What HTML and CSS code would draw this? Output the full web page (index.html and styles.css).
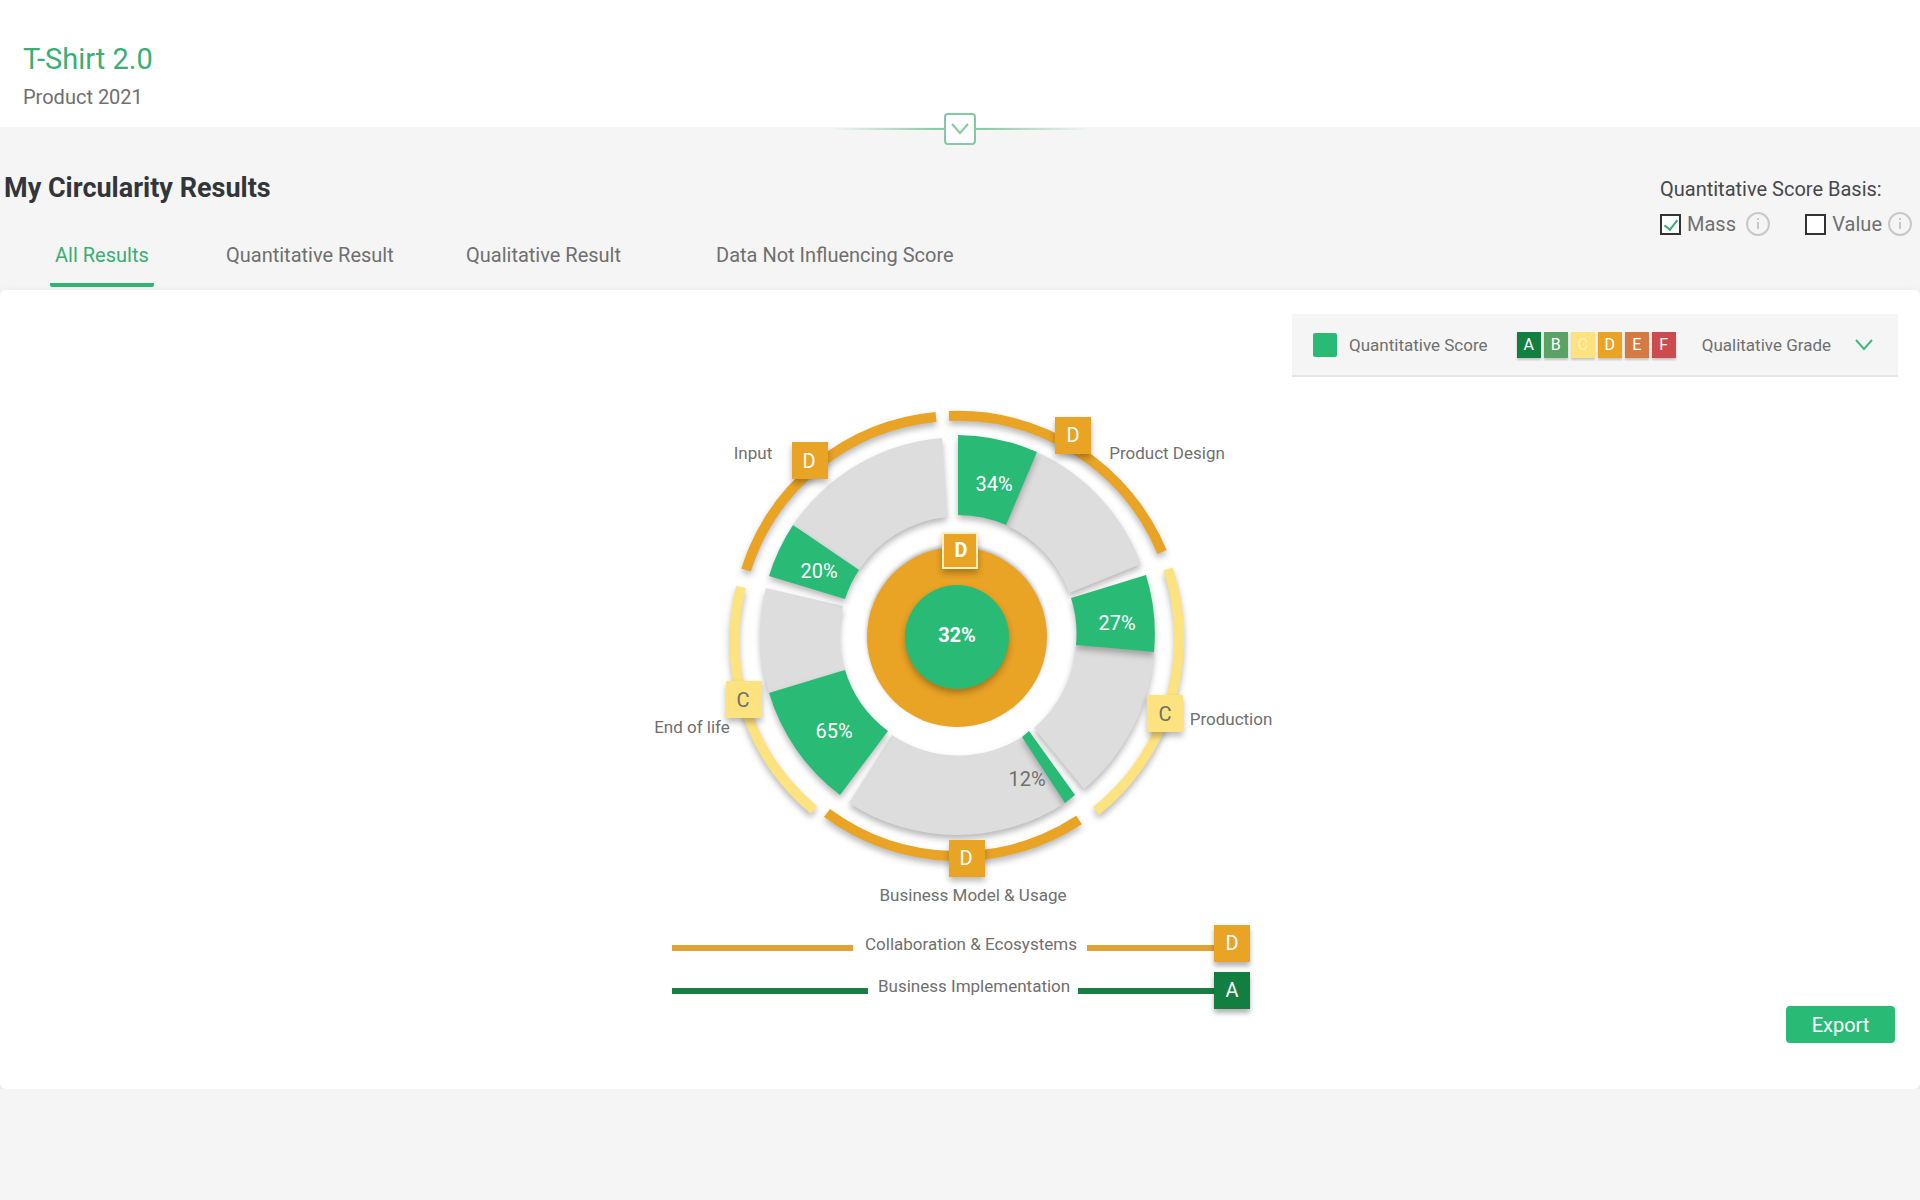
FILE: index.html
```html
<!DOCTYPE html>
<html lang="en">
<head>
<meta charset="utf-8">
<meta name="viewport" content="width=device-width, initial-scale=1">
<title>T-Shirt 2.0 – Circularity Results</title>
<link rel="stylesheet" href="styles.css">
</head>
<body>
<header class="product-header">
  <h1 class="product-name">T-Shirt 2.0</h1>
  <p class="product-period">Product 2021</p>
  <div class="expander">
    <button class="expander-button" type="button" aria-label="Expand header">
      <svg width="18" height="12" viewBox="0 0 18 12" aria-hidden="true"><path d="M1 1l8 9 8-9" fill="none" stroke="currentColor" stroke-width="2"/></svg>
    </button>
  </div>
</header>

<main>
  <section class="results-head">
    <div class="results-nav">
      <h2 class="results-title">My Circularity Results</h2>
      <nav class="tabs" aria-label="Results">
        <a class="tab tab-active" href="#all" aria-current="page">All Results</a>
        <a class="tab" href="#quantitative">Quantitative Result</a>
        <a class="tab" href="#qualitative">Qualitative Result</a>
        <a class="tab" href="#other">Data Not Influencing Score</a>
      </nav>
    </div>
    <fieldset class="basis">
      <legend class="basis-title">Quantitative Score Basis:</legend>
      <div class="basis-options">
        <div class="option option-mass">
          <input class="check" type="checkbox" id="mass" checked>
          <label for="mass">Mass</label>
          <button class="info" type="button" aria-label="About mass"><svg width="24" height="24" viewBox="0 0 24 24" aria-hidden="true"><circle cx="12" cy="12" r="11"/><path d="M12 10v7M12 6v2"/></svg></button>
        </div>
        <div class="option option-value">
          <input class="check" type="checkbox" id="value">
          <label for="value">Value</label>
          <button class="info" type="button" aria-label="About value"><svg width="24" height="24" viewBox="0 0 24 24" aria-hidden="true"><circle cx="12" cy="12" r="11"/><path d="M12 10v7M12 6v2"/></svg></button>
        </div>
      </div>
    </fieldset>
  </section>

  <section class="card">
    <div class="legend">
      <span class="legend-swatch"></span>
      <span class="legend-score">Quantitative Score</span>
      <span class="grades">
        <span class="grade grade-a">A</span><span class="grade grade-b">B</span><span class="grade grade-c">C</span><span class="grade grade-d">D</span><span class="grade grade-e">E</span><span class="grade grade-f">F</span>
      </span>
      <span class="legend-grade">Qualitative Grade</span>
      <button class="legend-toggle" type="button" aria-label="Show grades">
        <svg width="18" height="12" viewBox="0 0 18 12" aria-hidden="true"><path d="M1 1l8 9 8-9" fill="none" stroke="currentColor" stroke-width="2"/></svg>
      </button>
    </div>

    <svg class="wheel" width="660" height="516" viewBox="630 400 660 516" role="img" aria-label="Circularity score by life cycle stage">
      <!-- grade arcs -->
      <g class="arcs">
        <g class="shadow"><path class="arc-d" d="M949 416A221 221 0 0 1 1162 552"/></g>
        <g class="shadow"><path class="arc-c" d="M1168 569A221 221 0 0 1 1096 811"/></g>
        <g class="shadow"><path class="arc-d" d="M1079 820A221 221 0 0 1 827 813"/></g>
        <g class="shadow"><path class="arc-c" d="M814 810A221 221 0 0 1 741 587"/></g>
        <g class="shadow"><path class="arc-d" d="M746 570A221 221 0 0 1 936 417"/></g>
      </g>
      <!-- stage segments: remainder and score -->
      <g class="shadow rest">
        <path d="M1037 452A200 200 0 0 1 1141 564L1069 593A119 119 0 0 0 1006 525Z"/>
        <path d="M1154 652A198 198 0 0 1 1084 789L1034 728A119 119 0 0 0 1076 645Z"/>
        <path d="M1065 803A198 198 0 0 1 849 803L892 735A118 118 0 0 0 1022 737Z"/>
        <path d="M769 693A198 198 0 0 1 766 588L843 606A119 119 0 0 0 845 670Z"/>
        <path d="M793 525A200 200 0 0 1 942 438L947 517A119 119 0 0 0 859 570Z"/>
      </g>
      <g class="shadow score">
        <path d="M958 435A200 200 0 0 1 1037 452L1006 525A119 119 0 0 0 958 515Z"/>
        <path d="M1146 575A200 200 0 0 1 1154 652L1076 645A119 119 0 0 0 1071 598Z"/>
        <path d="M1029 731L1075 795L1065 803L1022 737Z"/>
        <path d="M840 795A200 200 0 0 1 769 693L845 670A119 119 0 0 0 888 731Z"/>
        <path d="M769 576A200 200 0 0 1 793 525L859 570A119 119 0 0 0 845 599Z"/>
      </g>
      <!-- overall result -->
      <g class="shadow-up"><circle class="total-grade" cx="957" cy="637" r="90"/></g>
      <g class="shadow"><circle class="total-score" cx="957" cy="637" r="52"/></g>

      <g class="shadow">
        <rect class="fill-d" x="792" y="442" width="36" height="37"/>
        <rect class="fill-d" x="1055" y="417" width="36" height="37"/>
        <rect class="fill-c" x="1147" y="695" width="36" height="37"/>
        <rect class="fill-d" x="949" y="840" width="36" height="37"/>
        <rect class="fill-c" x="726" y="681" width="36" height="37"/>
        <rect class="fill-d framed" x="943" y="533" width="34" height="35"/>
      </g>
      <g class="letters">
        <text x="809" y="468">D</text>
        <text x="1073" y="442">D</text>
        <text class="dark" x="1165" y="721">C</text>
        <text x="966" y="865">D</text>
        <text class="dark" x="743" y="707">C</text>
        <text class="strong" x="961" y="557">D</text>
        <text x="994" y="491">34%</text>
        <text x="1117" y="630">27%</text>
        <text class="dark" x="1027" y="786">12%</text>
        <text x="834" y="738">65%</text>
        <text x="819" y="578">20%</text>
        <text class="strong" x="957" y="642">32%</text>
      </g>
      <g class="names">
        <text x="753" y="459">Input</text>
        <text x="1167" y="459">Product Design</text>
        <text x="1231" y="725">Production</text>
        <text x="973" y="901">Business Model &amp; Usage</text>
        <text x="692" y="733">End of life</text>
      </g>
    </svg>

    <div class="card-foot">
      <div class="overall">
        <div class="overall-row row-d">
          <span class="rule rule-lead"></span><span class="overall-name">Collaboration &amp; Ecosystems</span><span class="rule"></span><span class="badge">D</span>
        </div>
        <div class="overall-row row-a">
          <span class="rule rule-lead"></span><span class="overall-name">Business Implementation</span><span class="rule"></span><span class="badge">A</span>
        </div>
      </div>
      <button class="export" type="button">Export</button>
    </div>
  </section>
</main>
</body>
</html>
```
FILE: styles.css
```css
* { box-sizing: border-box; }

body {
  margin: 0;
  background: #f5f5f5;
  color: #6f6f6f;
  font: 20px/24px Roboto, "Liberation Sans", sans-serif;
}

h1, h2, p { margin: 0; }

button {
  border: 0;
  padding: 0;
  background: none;
  font: inherit;
  cursor: pointer;
}

svg { display: block; }

/* Product header */
.product-header {
  position: relative;
  height: 127px;
  padding: 42px 23px 0;
  background: #fff;
}

.product-name {
  color: #3aae75;
  font-size: 29px;
  font-weight: 400;
  line-height: 34px;
}

.product-period { margin-top: 9px; }

.expander {
  position: absolute;
  left: 0;
  right: 0;
  bottom: -18px;
  display: flex;
  justify-content: center;
  background: linear-gradient(90deg, transparent, #8dcaa9 40%, #8dcaa9 60%, transparent) center / 260px 2px no-repeat;
}

.expander-button {
  display: grid;
  place-items: center;
  width: 32px;
  height: 32px;
  border: 2px solid #84c8a4;
  border-radius: 4px;
  background: #fff;
  color: #84c8a4;
}

/* Title, tabs and score basis */
.results-head {
  display: flex;
  justify-content: space-between;
  padding: 45px 8px 3px 4px;
}

.results-title {
  color: #32363a;
  font-size: 27px;
  font-weight: 700;
  line-height: 32px;
}

.tabs {
  display: grid;
  grid-template-columns: 171px 240px 250px auto;
  justify-items: start;
  margin: 39px 0 0 46px;
}

.tab {
  height: 44px;
  padding: 0 5px;
  border-bottom: 4px solid transparent;
  border-radius: 2px;
  color: inherit;
  text-decoration: none;
  white-space: nowrap;
}

.tab-active {
  border-color: #2fb574;
  color: #3aae75;
}

.basis {
  width: 252px;
  margin: 5px 0 0;
  border: 0;
  padding: 0;
}

.basis-title {
  padding: 0;
  color: #45484c;
}

.basis-options {
  display: flex;
  justify-content: space-between;
  margin-top: 11px;
}

.option {
  display: flex;
  align-items: center;
}

.option label { padding-left: 6px; }
.option-mass .info { margin-left: 10px; }
.option-value .info { margin-left: 6px; }

.check {
  display: grid;
  place-items: center;
  appearance: none;
  width: 21px;
  height: 21px;
  margin: 0;
  border: 2px solid #333;
  background: #fff;
}

.check:checked::before {
  content: "";
  width: 6px;
  height: 11px;
  margin-bottom: 2px;
  border: solid #3aae75;
  border-width: 0 2px 2px 0;
  transform: rotate(38deg);
}

.info svg {
  fill: none;
  stroke: #c8c8c8;
  stroke-width: 2;
}

/* Results card */
.card {
  padding: 24px 22px 46px;
  border-radius: 6px;
  background: #fff;
  box-shadow: 0 4px 12px rgba(0, 0, 0, 0.1);
}

.legend {
  display: flex;
  align-items: center;
  width: 606px;
  height: 63px;
  margin-left: auto;
  padding: 0 25px 0 21px;
  border-bottom: 2px solid #e6e6e6;
  background: #f5f5f5;
  font-size: 17px;
}

.legend-swatch {
  width: 24px;
  height: 24px;
  border-radius: 2px;
  background: #29bb76;
}

.legend-score { margin-left: 12px; }

.grades {
  display: flex;
  gap: 3px;
  margin: 0 26px 0 auto;
}

.grade {
  width: 24px;
  height: 26px;
  color: #fff;
  font-size: 16px;
  line-height: 26px;
  text-align: center;
  box-shadow: 0 2px 2px rgba(0, 0, 0, 0.2);
}

.grade-a { background: #127e40; }
.grade-b { background: #5ba363; }
.grade-c { background: #fde280; color: #fff3bd; }
.grade-d { background: #e9a325; }
.grade-e { background: #d37a45; }
.grade-f { background: #cc4b4f; }

.legend-toggle {
  margin-left: 24px;
  color: #3dba7d;
}

/* Life cycle wheel */
.wheel {
  max-width: 100%;
  margin: 23px auto 0;
}

.shadow { filter: drop-shadow(0 4px 3px rgba(0, 0, 0, 0.28)); }
.shadow-up { filter: drop-shadow(0 -2px 2px rgba(0, 0, 0, 0.3)); }

.arcs path {
  fill: none;
  stroke-width: 10;
}

.arc-d { stroke: #e9a325; }
.arc-c { stroke: #fde280; }
.rest { fill: #ddd; }
.score, .total-score { fill: #29bb76; }
.total-grade, .fill-d { fill: #e9a325; }
.fill-c { fill: #fde280; }

.framed {
  stroke: #fff0c0;
  stroke-width: 2;
}

.letters {
  fill: #fff;
  font-size: 20px;
  text-anchor: middle;
}

.letters .dark { fill: #6f6f6f; }
.letters .strong { font-weight: 700; }

.names {
  fill: #6f6f6f;
  font-size: 17px;
  text-anchor: middle;
}

/* Overall grades and export */
.card-foot {
  display: grid;
  grid-template-columns: 1fr 578px 1fr;
  margin-top: 9px;
  padding-left: 2px;
}

.overall {
  grid-column: 2;
  display: grid;
  gap: 10px;
  padding-bottom: 34px;
}

.overall-row {
  display: flex;
  align-items: center;
  font-size: 17px;
}

.rule {
  flex: 1;
  height: 6px;
  background: currentColor;
}

.row-d { color: #e2a336; }
.row-a { color: #1a7d44; }
.row-d .rule { margin-top: 8px; }
.row-d .rule-lead { flex: 0 0 181px; }
.row-a .rule-lead { flex: 0 0 196px; }

.overall-name {
  padding: 0 10px 0 12px;
  color: #6f6f6f;
}

.row-a .overall-name { padding: 0 8px 10px 10px; }

.badge {
  width: 36px;
  height: 37px;
  color: #fff;
  font-size: 20px;
  line-height: 37px;
  text-align: center;
  box-shadow: 0 4px 5px rgba(0, 0, 0, 0.3);
}

.row-d .badge { background: #e9a325; }
.row-a .badge { background: #127e40; }

.export {
  align-self: end;
  justify-self: end;
  width: 109px;
  height: 37px;
  margin-right: 3px;
  border-radius: 4px;
  background: #29bb76;
  color: #fff;
}
```
